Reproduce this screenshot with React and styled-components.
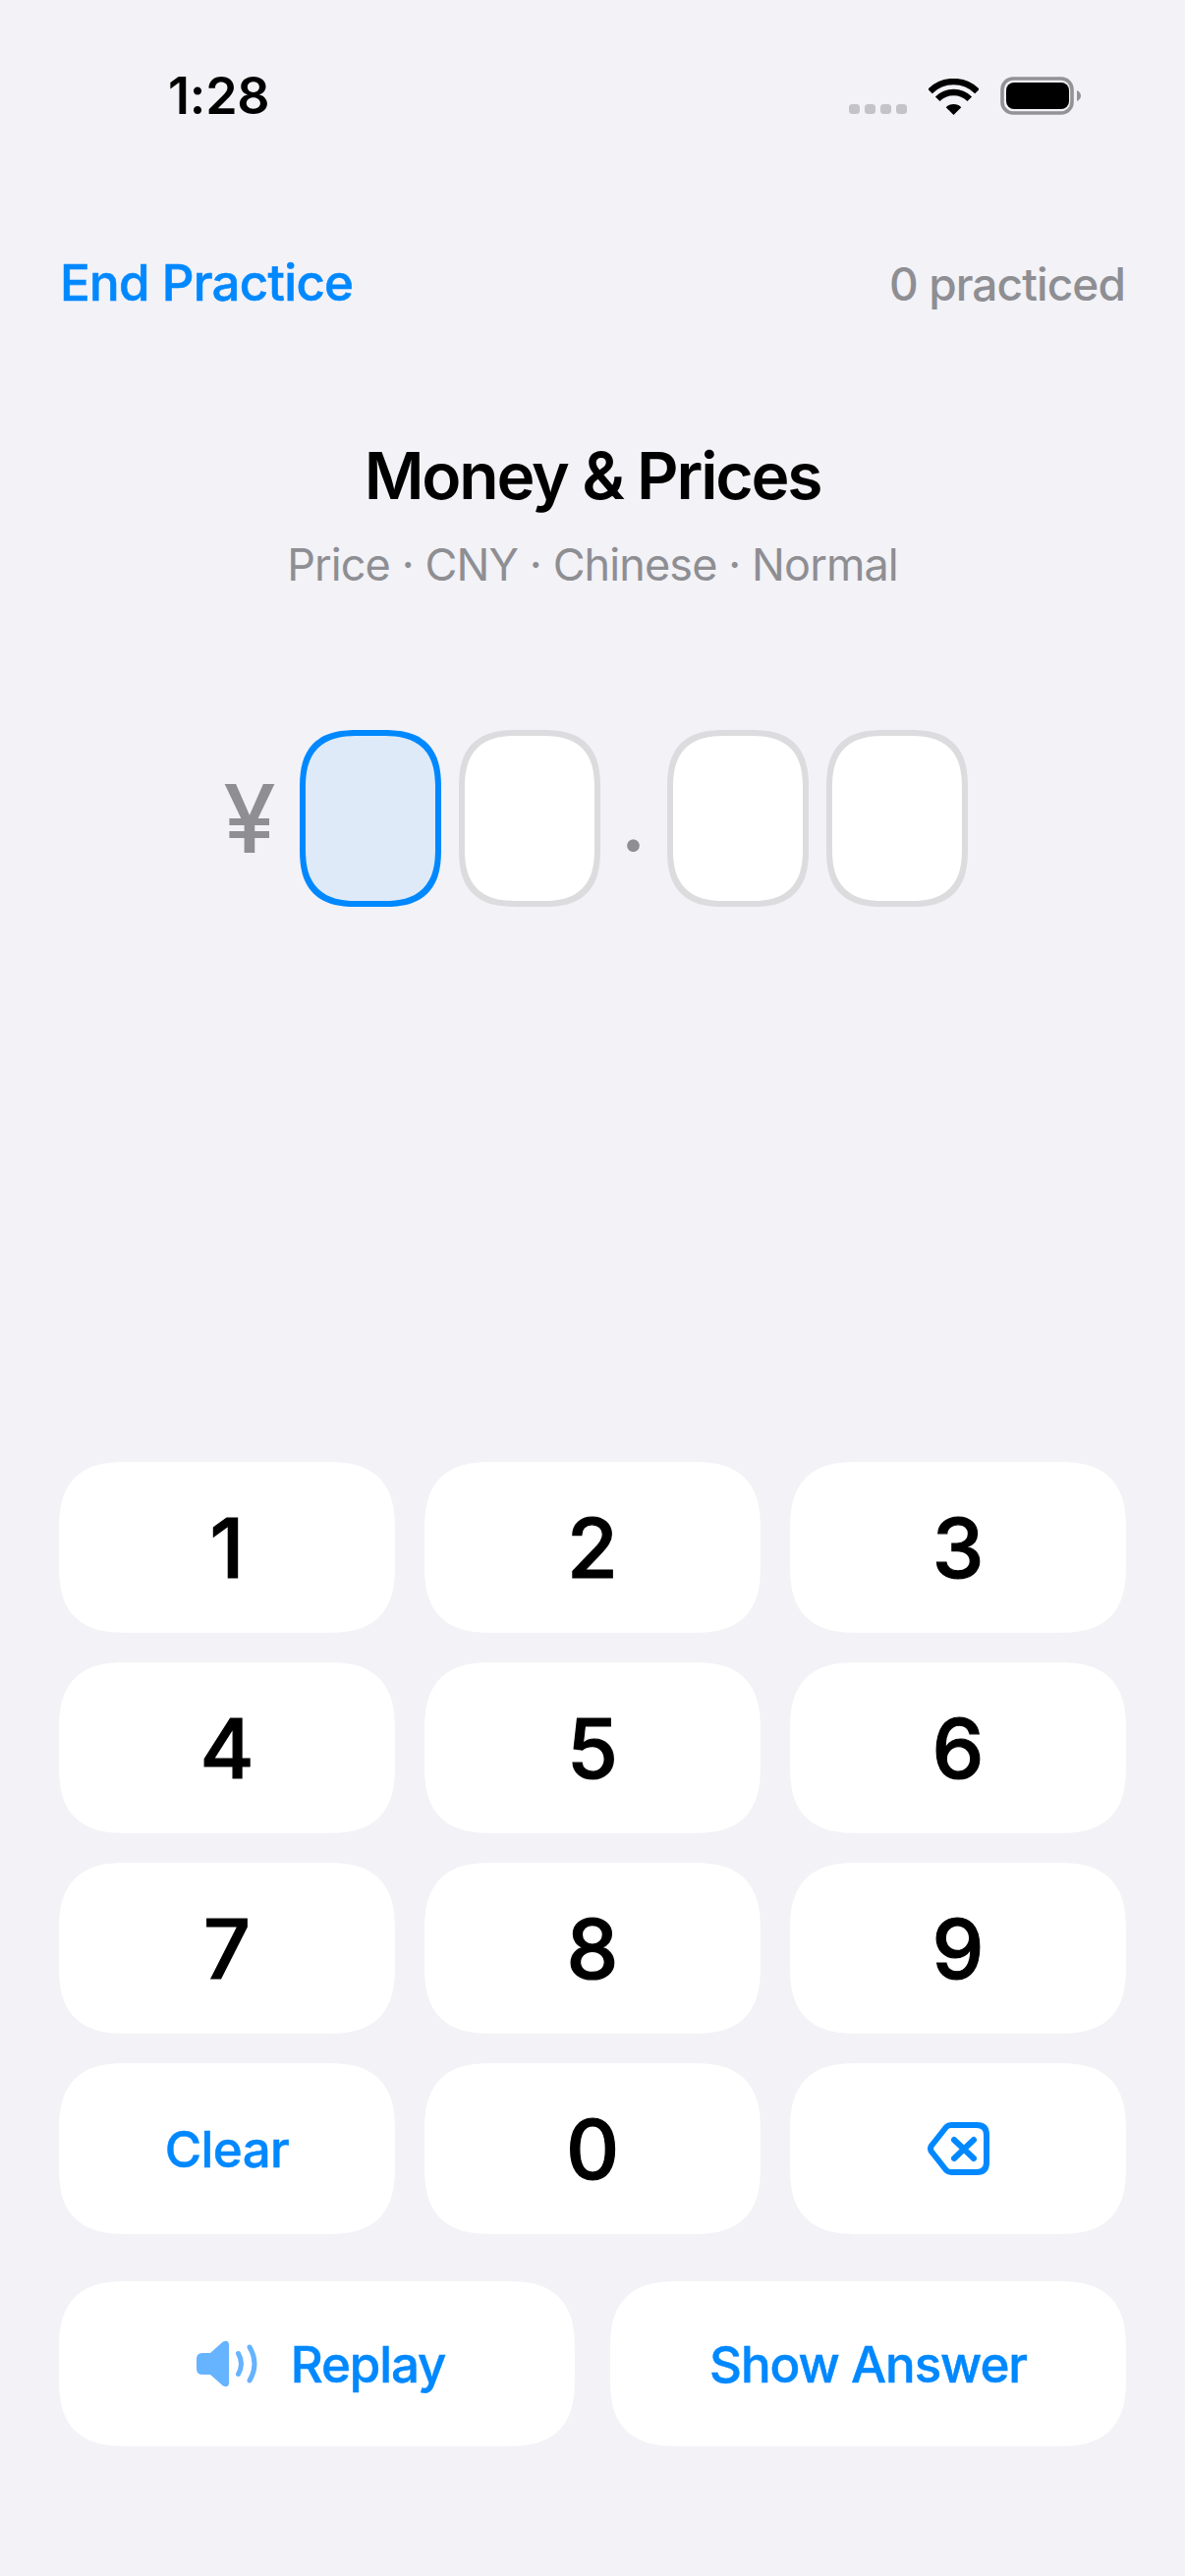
import React from 'react'
import styled, { createGlobalStyle, css } from 'styled-components'

const BLUE = '#0088ff'
const GRAY = '#8e8e93'
const FONT = 'Inter, "Liberation Sans", sans-serif'

const GlobalStyle = createGlobalStyle`
  html, body {
    margin: 0;
    padding: 0;
    background: #f2f2f7;
  }
  * {
    box-sizing: border-box;
  }
`

const squircle = (fallback, radius) => css`
  border-radius: ${fallback}px;
  @supports (corner-shape: squircle) {
    border-radius: ${radius}px;
    corner-shape: superellipse(1.4);
  }
`

const WifiIcon = () => (
  <svg width="51" height="37" viewBox="0 0 51 37" fill="none">
    <path d="M1.5 13 A34 34 0 0 1 49.5 13" stroke="#000" strokeWidth="6.5" />
    <path d="M9.2 20.7 A23 23 0 0 1 41.8 20.7" stroke="#000" strokeWidth="6.5" />
    <path d="M25.5 37 L17.7 29.2 A11 11 0 0 1 33.3 29.2 Z" fill="#000" />
  </svg>
)

const BatteryIcon = () => (
  <svg width="82" height="39" viewBox="0 0 82 39" fill="none">
    <rect x="2" y="2" width="71" height="35" rx="11" stroke="#939396" strokeWidth="3.6" />
    <rect x="6" y="6" width="64" height="27" rx="8" fill="#000" />
    <path d="M78 14 C80.5 15 82 17 82 19.5 C82 22 80.5 24 78 25 Z" fill="#939396" />
  </svg>
)

const SpeakerIcon = () => (
  <svg width="63" height="48" viewBox="0 0 63 48" fill="none">
    <path
      d="M6 13 H14 L27 1.5 Q33 -1 33 5 V43 Q33 49 27 46.5 L14 35 H6 Q0 35 0 29 V19 Q0 13 6 13 Z"
      fill="#66b3ff"
    />
    <path d="M42.5 13.5 Q48.5 24 42.5 34.5" stroke="#66b3ff" strokeWidth="5" strokeLinecap="round" />
    <path d="M54 7 Q64 24 54 41" stroke="#66b3ff" strokeWidth="5" strokeLinecap="round" />
  </svg>
)

const BackspaceIcon = () => (
  <svg width="63" height="54" viewBox="0 0 63 54" fill="none">
    <path
      d="M24 3 H50 Q60 3 60 13 V41 Q60 51 50 51 H24 Q21 51 19 49 L4 30 Q2 27 4 24 L19 5 Q21 3 24 3 Z"
      stroke={BLUE}
      strokeWidth="6"
      strokeLinejoin="round"
    />
    <path d="M27 18 L47 37 M47 18 L27 37" stroke={BLUE} strokeWidth="6" strokeLinecap="round" />
  </svg>
)

const keys = ['1', '2', '3', '4', '5', '6', '7', '8', '9']

const App = () => {
  return (
    <Page>
      <GlobalStyle />
      <StatusBar>
        <Time>1:28</Time>
        <StatusIcons>
          <SignalDots>
            <i /><i /><i /><i />
          </SignalDots>
          <WifiIcon />
          <BatteryIcon />
        </StatusIcons>
      </StatusBar>

      <Header>
        <EndButton>End Practice</EndButton>
        <Counter>0 practiced</Counter>
      </Header>

      <Title>Money &amp; Prices</Title>
      <Subtitle>Price · CNY · Chinese · Normal</Subtitle>

      <AnswerRow>
        <Currency>¥</Currency>
        <DigitBox $active />
        <DigitBox />
        <Separator>.</Separator>
        <DigitBox />
        <DigitBox />
      </AnswerRow>

      <Keypad>
        {keys.map((key) => (
          <Key key={key}>{key}</Key>
        ))}
        <Key $label>Clear</Key>
        <Key>0</Key>
        <Key aria-label="Delete"><BackspaceIcon /></Key>
      </Keypad>

      <Actions>
        <ActionButton $withIcon>
          <SpeakerIcon />
          Replay
        </ActionButton>
        <ActionButton>Show Answer</ActionButton>
      </Actions>
    </Page>
  )
}

export default App

const Page = styled.div`
  width: 1206px;
  height: 2622px;
  display: flex;
  flex-direction: column;
  padding-bottom: 132px;
  background: #f2f2f7;
  font-family: ${FONT};
  overflow: hidden;
`

const StatusBar = styled.div`
  height: 258px;
  padding: 68px 106px 0 171px;
  display: flex;
  justify-content: space-between;
  align-items: flex-start;
`

const Time = styled.span`
  font-size: 52px;
  line-height: 60px;
  font-weight: 600;
  color: #000;
  letter-spacing: -0.2px;
`

const StatusIcons = styled.div`
  margin-top: 10px;
  display: flex;
  align-items: flex-end;
  gap: 22px;
`

const SignalDots = styled.div`
  display: flex;
  gap: 5px;
  margin-bottom: 1px;

  i {
    width: 11px;
    height: 10px;
    border-radius: 3.5px;
    background: #c4c4c6;
  }
`

const Header = styled.div`
  height: 60px;
  padding: 0 61px;
  display: flex;
  justify-content: space-between;
  align-items: baseline;
`

const EndButton = styled.button`
  padding: 0;
  border: 0;
  background: none;
  font-family: inherit;
  font-size: 51px;
  line-height: 60px;
  font-weight: 500;
  color: ${BLUE};
  letter-spacing: -0.7px;
  -webkit-text-stroke: 0.6px ${BLUE};
`

const Counter = styled.span`
  font-size: 46px;
  line-height: 60px;
  font-weight: 500;
  color: ${GRAY};
  letter-spacing: -0.9px;
`

const Title = styled.h1`
  margin: 126px 0 0;
  font-size: 66px;
  line-height: 80px;
  font-weight: 600;
  color: #000;
  text-align: center;
  letter-spacing: -2.2px;
`

const Subtitle = styled.p`
  margin: 24px 0 0;
  font-size: 45px;
  line-height: 54px;
  font-weight: 400;
  color: ${GRAY};
  text-align: center;
  letter-spacing: -0.9px;
`

const AnswerRow = styled.div`
  margin-top: 141px;
  display: flex;
  justify-content: center;
  align-items: center;
  gap: 18px;
`

const Currency = styled.span`
  width: 65px;
  font-size: 96px;
  line-height: 100px;
  font-weight: 500;
  color: ${GRAY};
  text-align: center;
`

const DigitBox = styled.div`
  width: 144px;
  height: 180px;
  border: 6px solid ${({ $active }) => ($active ? BLUE : '#dcdcde')};
  background: ${({ $active }) => ($active ? '#deeaf8' : '#fff')};
  ${squircle(42, 60)}
`

const Separator = styled.span`
  align-self: flex-end;
  width: 32px;
  margin-bottom: 50px;
  font-size: 80px;
  line-height: 72px;
  font-weight: 600;
  color: ${GRAY};
  text-align: center;
`

const Keypad = styled.div`
  margin-top: auto;
  padding: 0 60px;
  display: grid;
  grid-template-columns: repeat(3, 342px);
  grid-auto-rows: 174px;
  gap: 30px;
`

const Key = styled.button`
  display: flex;
  align-items: center;
  justify-content: center;
  padding: 0;
  border: 0;
  background: #fff;
  font-family: inherit;
  font-size: ${({ $label }) => ($label ? '51px' : '84px')};
  font-weight: 500;
  letter-spacing: ${({ $label }) => ($label ? '-0.6px' : '0')};
  color: ${({ $label }) => ($label ? BLUE : '#000')};
  -webkit-text-stroke: ${({ $label }) => ($label ? `0.5px ${BLUE}` : '1.2px #000')};
  ${squircle(54, 70)}
`

const Actions = styled.div`
  margin-top: 48px;
  padding: 0 60px;
  display: grid;
  grid-template-columns: 1fr 1fr;
  gap: 36px;
`

const ActionButton = styled.button`
  height: 168px;
  display: flex;
  align-items: center;
  justify-content: center;
  gap: 33px;
  padding: 0 0 0 ${({ $withIcon }) => ($withIcon ? '8px' : '0')};
  border: 0;
  background: #fff;
  font-family: inherit;
  font-size: 51px;
  font-weight: 500;
  letter-spacing: -1.1px;
  color: ${BLUE};
  -webkit-text-stroke: 0.5px ${BLUE};
  ${squircle(54, 70)}
`
